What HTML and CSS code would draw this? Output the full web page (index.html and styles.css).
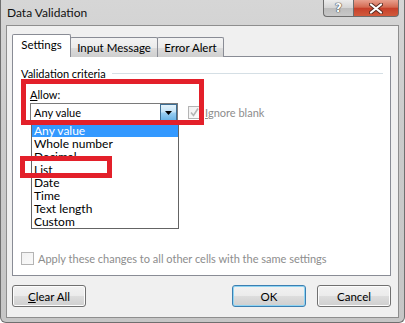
FILE: index.html
```html
<!DOCTYPE html>
<html>
<head>
<meta charset="utf-8">
<title>Data Validation</title>
<link rel="stylesheet" href="styles.css">
</head>
<body>
<div class="window">
  <div class="titlebar">
    <span class="title">Data Validation</span>
    <div class="caption-btns">
      <div class="cbtn help"><span>?</span></div>
      <div class="cbtn close">
        <svg width="14" height="11" viewBox="0 0 14 11">
          <path d="M2 1.5 L12 9.5 M12 1.5 L2 9.5" stroke="#5a2a20" stroke-width="4" stroke-linecap="round"/>
          <path d="M2 1.5 L12 9.5 M12 1.5 L2 9.5" stroke="#ffffff" stroke-width="2.2" stroke-linecap="round"/>
        </svg>
      </div>
    </div>
  </div>
  <div class="client">
    <div class="tabs">
      <div class="tab active">Settings</div>
      <div class="tab">Input Message</div>
      <div class="tab">Error Alert</div>
    </div>
    <div class="panel">
      <div class="group-title"><span>Validation criteria</span><span class="rule"></span></div>
      <div class="allow-label"><u>A</u>llow:</div>
      <div class="allow-row">
        <div class="combo">
          <span class="combo-text">Any value</span>
          <div class="drop-btn">
            <svg width="7" height="4" viewBox="0 0 7 4"><path d="M0 0 H7 L3.5 4 Z" fill="#000"/></svg>
          </div>
        </div>
        <div class="check disabled">
          <span class="box">
            <svg width="11" height="11" viewBox="0 0 11 11"><path d="M2 5.5 L4.5 8.5 L9 1.5" fill="none" stroke="#b4b4b4" stroke-width="1.6"/></svg>
          </span>
          <span><u>I</u>gnore blank</span>
        </div>
      </div>
      <div class="check disabled apply">
        <span class="box"></span>
        <span>Apply these changes to all other cells with the same settings</span>
      </div>
    </div>
    <div class="footer">
      <button class="btn"><u>C</u>lear All</button>
      <span class="grow"></span>
      <button class="btn default">OK</button>
      <button class="btn">Cancel</button>
    </div>
  </div>
  <ul class="droplist">
    <li class="sel">Any value</li>
    <li>Whole number</li>
    <li>Decimal</li>
    <li>List</li>
    <li>Date</li>
    <li>Time</li>
    <li>Text length</li>
    <li>Custom</li>
  </ul>
  <div class="annot annot-allow"></div>
  <div class="annot annot-list"></div>
</div>
</body>
</html>
```

FILE: styles.css
```css
html, body {
  margin: 0;
  padding: 0;
  background: #ffffff;
}
body {
  font-family: "Lato", "Open Sans", sans-serif;
  font-size: 11px;
  color: #000;
}
.window {
  position: relative;
  width: 405px;
  height: 323px;
  box-sizing: border-box;
  border: 1px solid #6f6f6f;
  border-top: none;
  border-radius: 0 0 6px 6px;
  background: linear-gradient(180deg, #d6d6d6 0%, #cbcbcb 40%, #c6c6c6 100%);
  padding: 0 5px 4px 5px;
  display: flex;
  flex-direction: column;
}
.titlebar {
  height: 25px;
  display: flex;
  align-items: flex-start;
}
.title {
  padding-left: 1px;
  padding-top: 5px;
  font-size: 12px;
  line-height: 16px;
  color: #111;
}
.caption-btns {
  margin-left: auto;
  display: flex;
}
.cbtn {
  height: 17px;
  box-sizing: border-box;
  border: 1px solid #6d6d6d;
  border-top: none;
  display: flex;
  align-items: center;
  justify-content: center;
}
.help {
  width: 30px;
  border-radius: 0 0 0 4px;
  border-right: none;
  background: linear-gradient(180deg, #ececec 0%, #d4d4d4 50%, #bcbcbc 51%, #c8c8c8 100%);
}
.help span {
  font-family: "DejaVu Sans", sans-serif;
  font-weight: bold;
  font-size: 12px;
  color: #fff;
  line-height: 12px;
  text-shadow: 0 0 1px #444, 0 0 1px #444, 0 0 1px #444;
}
.close {
  width: 46px;
  border-radius: 0 0 4px 0;
  background: linear-gradient(180deg, #e8a08e 0%, #d46a52 45%, #c7402a 52%, #d15a3c 100%);
}
.client {
  flex: 1;
  background: #f0f0f0;
  border: 1px solid #8e8e8e;
  padding: 8px 7px 10px 5px;
  display: flex;
  flex-direction: column;
}
.tabs {
  display: flex;
  align-items: flex-end;
  height: 23px;
  margin-bottom: -1px;
  position: relative;
  z-index: 1;
  font-size: 11.5px;
}
.tab {
  height: 20px;
  box-sizing: border-box;
  border: 1px solid #898c95;
  border-bottom: none;
  margin-left: -1px;
  padding: 0;
  white-space: nowrap;
  line-height: 19px;
  text-align: center;
  background: linear-gradient(180deg, #f3f3f3 0%, #ebebeb 50%, #dddddd 51%, #cfcfcf 100%);
  border-radius: 2px 2px 0 0;
}
.tab:nth-child(1) { width: 59px; margin-left: 0; }
.tab:nth-child(2) { width: 88px; }
.tab:nth-child(3) { width: 67px; }
.tab.active {
  height: 23px;
  background: #ffffff;
  line-height: 20px;
  padding-bottom: 2px;
}
.panel {
  height: 220px;
  box-sizing: border-box;
  border: 1px solid #898c95;
  background: #ffffff;
  padding: 9px 7px 9px 8px;
  display: flex;
  flex-direction: column;
}
.group-title {
  display: flex;
  align-items: center;
  line-height: 15px;
}
.rule {
  flex: 1;
  height: 1px;
  background: #d5dfe5;
  margin-left: 6px;
}
.allow-label {
  margin: 6px 0 0 9px;
  line-height: 15px;
}
.allow-row {
  display: flex;
  align-items: center;
  margin: 1px 0 0 9px;
}
.combo {
  width: 148px;
  height: 19px;
  box-sizing: border-box;
  border: 1px solid #7a7a7a;
  background: #fff;
  display: flex;
  align-items: center;
  padding: 0 0 0 3px;
}
.combo-text {
  flex: 1;
  line-height: 15px;
}
.drop-btn {
  width: 17px;
  height: 17px;
  box-sizing: border-box;
  border: 1px solid #3d6e94;
  background: linear-gradient(180deg, #e4f3fc 0%, #c4e4f7 45%, #97cdf0 55%, #6ab4e6 100%);
  display: flex;
  align-items: center;
  justify-content: center;
}
.check {
  display: flex;
  align-items: center;
  gap: 4px;
  line-height: 15px;
  white-space: nowrap;
}
.check.disabled { color: #8d8d8d; }
.box {
  width: 13px;
  height: 13px;
  flex: none;
  box-sizing: border-box;
  border: 1px solid #b4b4b4;
  background: linear-gradient(135deg, #f1f1f1, #fafafa);
  display: flex;
  align-items: center;
  justify-content: center;
}
.allow-row .check { margin-left: 10px; }
.apply { margin-top: auto; }
.footer {
  display: flex;
  align-items: center;
  margin-top: 9px;
  gap: 11px;
}
.grow { flex: 1; }
.btn {
  width: 74px;
  height: 22px;
  box-sizing: border-box;
  border: 1px solid #707070;
  border-radius: 3px;
  background: linear-gradient(180deg, #f2f2f2 0%, #ebebeb 50%, #dddddd 51%, #cfcfcf 100%);
  font-family: inherit;
  font-size: 11.5px;
  color: #000;
  padding: 0;
  box-shadow: inset 0 0 0 1px #fcfcfc;
}
.btn.default {
  border-color: #3c7fb1;
  box-shadow: inset 0 0 0 1px #8fd4f3;
}
.droplist {
  position: absolute;
  left: 30px;
  top: 123px;
  width: 148px;
  margin: 0;
  padding: 0;
  list-style: none;
  box-sizing: border-box;
  border: 1px solid #646464;
  background: #fff;
  font-size: 12px;
}
.droplist li {
  height: 13px;
  line-height: 13px;
  padding-left: 2px;
}
.droplist li.sel {
  background: #3399ff;
  color: #fff;
}
.annot {
  position: absolute;
  box-sizing: border-box;
  border: 5px solid #e3202a;
}
.annot-allow {
  left: 20px;
  top: 79px;
  width: 183px;
  height: 46px;
}
.annot-list {
  left: 19px;
  top: 156px;
  width: 92px;
  height: 22px;
}
```
